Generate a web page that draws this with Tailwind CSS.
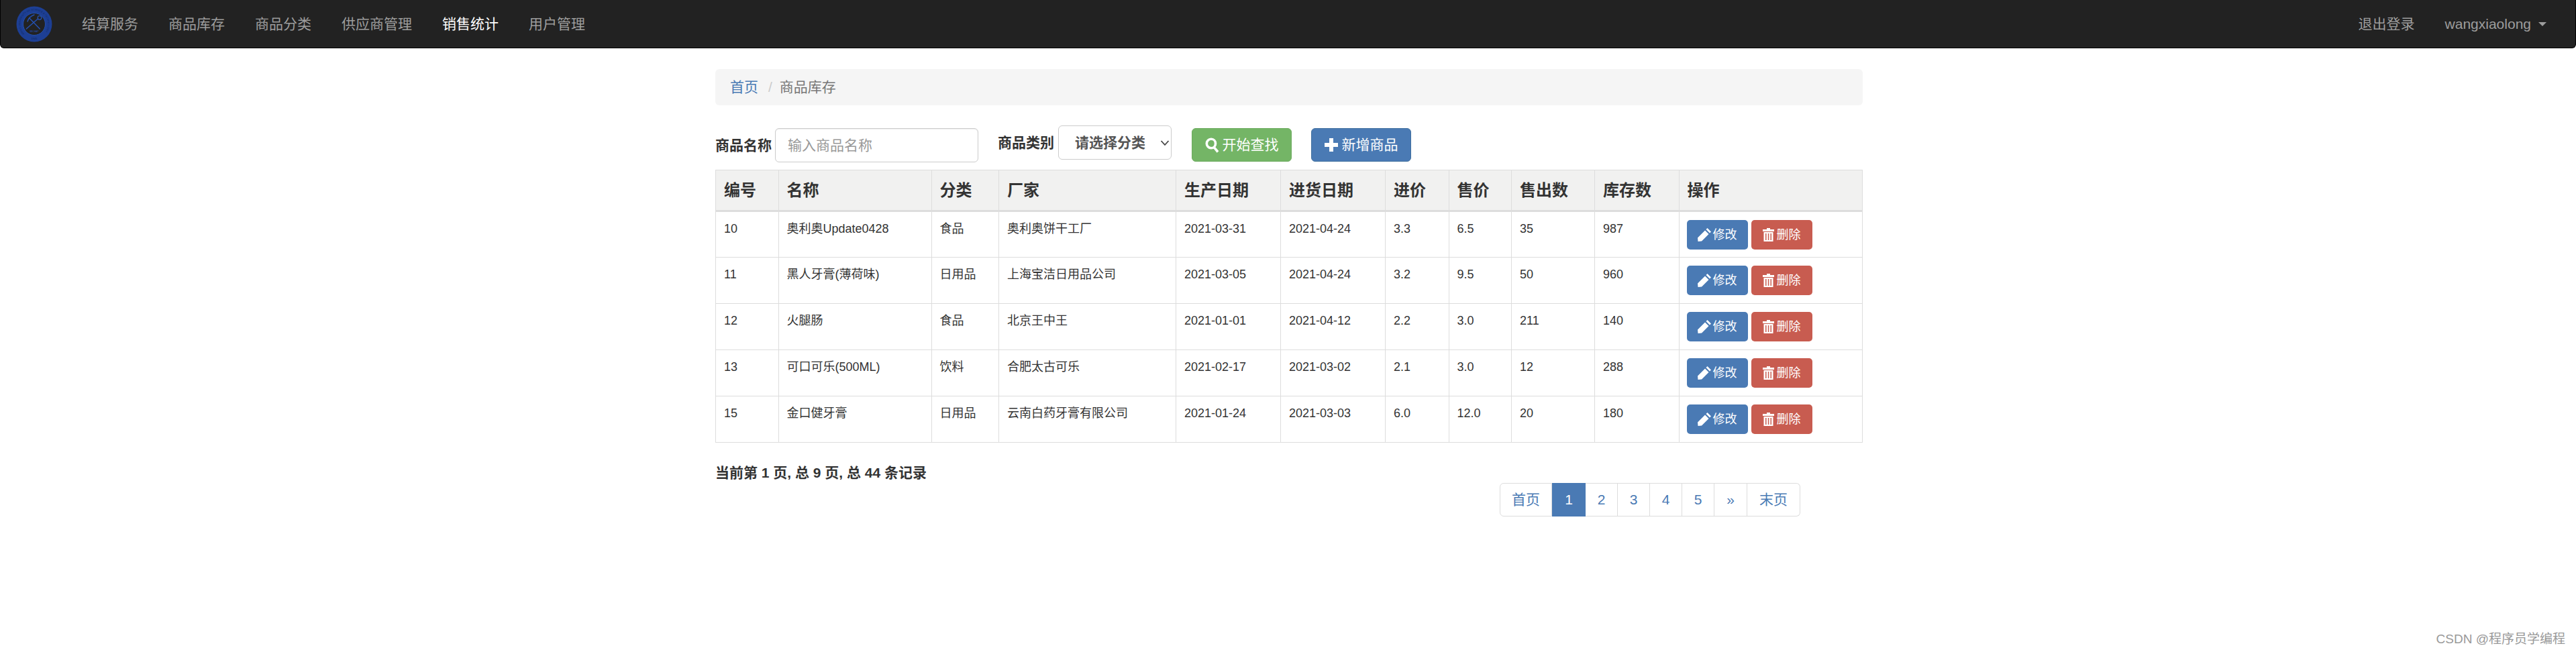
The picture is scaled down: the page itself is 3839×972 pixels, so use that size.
<!doctype html>
<html lang="zh-CN">
<head>
<meta charset="utf-8">
<title>商品库存</title>
<script src="https://cdn.jsdelivr.net/npm/@tailwindcss/browser@4"></script>
</head>
<body class="relative h-[972px] overflow-hidden bg-white text-[#333] font-['Liberation_Sans','Noto_Sans_CJK_SC',sans-serif]">
<nav class="flex h-[72px] items-center rounded-b-[6px] border border-black border-t-0 bg-[#222] text-[21px] text-[#9d9d9d]">
  <svg class="ml-[23px] h-[54px] w-[54px] shrink-0" viewBox="0 0 54 54" fill="none">
    <circle cx="27" cy="27" r="26.500" fill="#1d3f94"/>
    <circle cx="27" cy="27" r="16.500" fill="#222" stroke="#2450b0" stroke-width="1"/>
    <path id="logo-arc" d="M12.500 41.500a20.500 20.500 0 1 1 29 0" fill="none"/>
    <text font-size="3.800" fill="#11285f" font-family="Liberation Sans"><textPath href="#logo-arc" textLength="92" lengthAdjust="spacingAndGlyphs">ANHUI UNIVERSITY OF SCIENCE &amp; TECHNOLOGY</textPath></text>
    <text x="27" y="50" text-anchor="middle" font-size="4" fill="#0f2354" font-family="Liberation Sans">1945</text>
    <path d="M15.300 34 32.500 19M35.300 34 20.300 18.500M17 23c1-4 5-8 10-10" stroke="#2450b0" stroke-width="1.500" stroke-linecap="round"/>
    <circle cx="35" cy="17.500" r="2.800" stroke="#2450b0" stroke-width="1.300"/>
    <text x="27" y="39" text-anchor="middle" font-size="3.200" fill="#2450b0" font-family="Liberation Sans">BBCHAP</text>
  </svg>
  <ul class="ml-[44px] flex gap-[45px]">
    <li><a href="#">结算服务</a></li>
    <li><a href="#">商品库存</a></li>
    <li><a href="#">商品分类</a></li>
    <li><a href="#">供应商管理</a></li>
    <li><a href="#" class="text-white">销售统计</a></li>
    <li><a href="#">用户管理</a></li>
  </ul>
  <ul class="ml-auto flex items-center gap-[45px] pr-[43px]">
    <li><a href="#">退出登录</a></li>
    <li class="flex items-center gap-[11px]"><a href="#">wangxiaolong</a><span class="h-0 w-0 border-x-[6px] border-t-[6px] border-x-transparent border-t-[#9d9d9d]"></span></li>
  </ul>
</nav>

<main class="ml-[1066px] w-[1710px] pt-[31px]">
  <div class="flex h-[54px] items-center rounded-[6px] bg-[#f5f5f5] px-[22px] text-[21px]">
    <a href="#" class="text-[#4a7ab4]">首页</a>
    <span class="ml-[15px] text-[#ccc]">/</span>
    <span class="ml-[11px] text-[#777]">商品库存</span>
  </div>

  <form class="mt-[30px] flex h-[66px] items-start text-[21px]">
    <label class="mt-[4px] flex items-center font-bold">
      <span class="w-[89px]">商品名称</span>
      <input class="h-[51px] w-[303px] rounded-[6px] border border-[#ccc] px-[18px] font-normal shadow-[inset_0_1px_1px_rgba(0,0,0,0.075)] placeholder:text-[#999]" placeholder="输入商品名称">
    </label>
    <label class="ml-[29px] flex items-center font-bold">
      <span class="w-[90px]">商品类别</span>
      <span class="relative block">
        <select class="h-[51px] w-[169px] appearance-none rounded-[6px] border border-[#ccc] bg-white pl-[24px] font-bold text-[#555]"><option>请选择分类</option></select>
        <svg class="absolute right-[3px] top-[21px] h-[10px] w-[14px]" viewBox="0 0 14 10" fill="none"><path d="M1.500 2 7 8l5.500-6" stroke="#444" stroke-width="1.800"/></svg>
      </span>
    </label>
    <button type="button" class="ml-[30px] mt-[4px] flex h-[50px] w-[149px] items-center justify-center gap-[5px] rounded-[6px] border border-[#6cab5e] bg-[#74b566] text-white">
      <svg class="h-[23px] w-[21px]" viewBox="0 0 21 23"><path fill="none" stroke="#fff" stroke-width="3.600" d="M9 2.200c3.800 0 6.500 3 6.500 6.800s-2.700 6.800-6.500 6.800-6.700-3-6.700-6.800 2.900-6.800 6.700-6.800zM13.500 14.800l5.500 6.700"/></svg>
      开始查找
    </button>
    <button type="button" class="ml-[29px] mt-[4px] flex h-[50px] w-[149px] items-center justify-center gap-[6px] rounded-[6px] border border-[#41709f] bg-[#4a7ab4] text-white">
      <svg class="h-[20px] w-[20px]" viewBox="0 0 20 20"><path fill="#fff" d="M7 0h6v7h7v6h-7v7H7v-7H0V7h7z"/></svg>
      新增商品
    </button>
  </form>

  <table class="w-[1710px] table-fixed border-collapse text-left text-[18px]">
    <colgroup>
      <col class="w-[93.500px]"><col class="w-[228px]"><col class="w-[100.500px]"><col class="w-[264px]"><col class="w-[156px]"><col class="w-[156px]"><col class="w-[94.500px]"><col class="w-[93.500px]"><col class="w-[124px]"><col class="w-[125.500px]"><col class="w-[273.500px]">
    </colgroup>
    <thead>
      <tr class="h-[61px] bg-[#f1f1f0] text-[24px]">
        <th class="border border-b-[3px] border-[#ddd] px-3">编号</th>
        <th class="border border-b-[3px] border-[#ddd] px-3">名称</th>
        <th class="border border-b-[3px] border-[#ddd] px-3">分类</th>
        <th class="border border-b-[3px] border-[#ddd] px-3">厂家</th>
        <th class="border border-b-[3px] border-[#ddd] px-3">生产日期</th>
        <th class="border border-b-[3px] border-[#ddd] px-3">进货日期</th>
        <th class="border border-b-[3px] border-[#ddd] px-3">进价</th>
        <th class="border border-b-[3px] border-[#ddd] px-3">售价</th>
        <th class="border border-b-[3px] border-[#ddd] px-3">售出数</th>
        <th class="border border-b-[3px] border-[#ddd] px-3">库存数</th>
        <th class="border border-b-[3px] border-[#ddd] px-3">操作</th>
      </tr>
    </thead>
    <tbody>
      <tr class="h-[69px]">
        <td class="border border-[#ddd] px-3 pt-3 align-top leading-[26px]">10</td>
        <td class="border border-[#ddd] px-3 pt-3 align-top leading-[26px]">奥利奥Update0428</td>
        <td class="border border-[#ddd] px-3 pt-3 align-top leading-[26px]">食品</td>
        <td class="border border-[#ddd] px-3 pt-3 align-top leading-[26px]">奥利奥饼干工厂</td>
        <td class="border border-[#ddd] px-3 pt-3 align-top leading-[26px]">2021-03-31</td>
        <td class="border border-[#ddd] px-3 pt-3 align-top leading-[26px]">2021-04-24</td>
        <td class="border border-[#ddd] px-3 pt-3 align-top leading-[26px]">3.3</td>
        <td class="border border-[#ddd] px-3 pt-3 align-top leading-[26px]">6.5</td>
        <td class="border border-[#ddd] px-3 pt-3 align-top leading-[26px]">35</td>
        <td class="border border-[#ddd] px-3 pt-3 align-top leading-[26px]">987</td>
        <td class="border border-[#ddd] pl-[11px] pt-3 align-top"><div class="flex gap-[5px]">
          <a href="#" class="flex h-[44px] w-[91px] items-center justify-center gap-[3px] rounded-[5px] bg-[#4a7ab4] text-white"><svg class="h-[20px] w-[20px]" viewBox="0 0 20 20"><path fill="#fff" d="M14.500 0 20 5.500 18 7.500 12.500 2zM11 3.500 16.500 9 6 19.500.500 20 0 14.500z"/></svg>修改</a>
          <a href="#" class="flex h-[44px] w-[91px] items-center justify-center gap-[4px] rounded-[5px] bg-[#c85c50] text-white"><svg class="h-[20px] w-[17px]" viewBox="0 0 17 20"><path fill="#fff" fill-rule="evenodd" d="M6 0h5v2h6v3H0V2h6zM1.500 6h14v14h-14zM4 8v10h1.500V8zm3.800 0v10h1.500V8zm3.700 0v10H13V8z"/></svg>删除</a>
        </div></td>
      </tr>
      <tr class="h-[69px]">
        <td class="border border-[#ddd] px-3 pt-3 align-top leading-[26px]">11</td>
        <td class="border border-[#ddd] px-3 pt-3 align-top leading-[26px]">黑人牙膏(薄荷味)</td>
        <td class="border border-[#ddd] px-3 pt-3 align-top leading-[26px]">日用品</td>
        <td class="border border-[#ddd] px-3 pt-3 align-top leading-[26px]">上海宝洁日用品公司</td>
        <td class="border border-[#ddd] px-3 pt-3 align-top leading-[26px]">2021-03-05</td>
        <td class="border border-[#ddd] px-3 pt-3 align-top leading-[26px]">2021-04-24</td>
        <td class="border border-[#ddd] px-3 pt-3 align-top leading-[26px]">3.2</td>
        <td class="border border-[#ddd] px-3 pt-3 align-top leading-[26px]">9.5</td>
        <td class="border border-[#ddd] px-3 pt-3 align-top leading-[26px]">50</td>
        <td class="border border-[#ddd] px-3 pt-3 align-top leading-[26px]">960</td>
        <td class="border border-[#ddd] pl-[11px] pt-3 align-top"><div class="flex gap-[5px]">
          <a href="#" class="flex h-[44px] w-[91px] items-center justify-center gap-[3px] rounded-[5px] bg-[#4a7ab4] text-white"><svg class="h-[20px] w-[20px]" viewBox="0 0 20 20"><path fill="#fff" d="M14.500 0 20 5.500 18 7.500 12.500 2zM11 3.500 16.500 9 6 19.500.500 20 0 14.500z"/></svg>修改</a>
          <a href="#" class="flex h-[44px] w-[91px] items-center justify-center gap-[4px] rounded-[5px] bg-[#c85c50] text-white"><svg class="h-[20px] w-[17px]" viewBox="0 0 17 20"><path fill="#fff" fill-rule="evenodd" d="M6 0h5v2h6v3H0V2h6zM1.500 6h14v14h-14zM4 8v10h1.500V8zm3.800 0v10h1.500V8zm3.700 0v10H13V8z"/></svg>删除</a>
        </div></td>
      </tr>
      <tr class="h-[69px]">
        <td class="border border-[#ddd] px-3 pt-3 align-top leading-[26px]">12</td>
        <td class="border border-[#ddd] px-3 pt-3 align-top leading-[26px]">火腿肠</td>
        <td class="border border-[#ddd] px-3 pt-3 align-top leading-[26px]">食品</td>
        <td class="border border-[#ddd] px-3 pt-3 align-top leading-[26px]">北京王中王</td>
        <td class="border border-[#ddd] px-3 pt-3 align-top leading-[26px]">2021-01-01</td>
        <td class="border border-[#ddd] px-3 pt-3 align-top leading-[26px]">2021-04-12</td>
        <td class="border border-[#ddd] px-3 pt-3 align-top leading-[26px]">2.2</td>
        <td class="border border-[#ddd] px-3 pt-3 align-top leading-[26px]">3.0</td>
        <td class="border border-[#ddd] px-3 pt-3 align-top leading-[26px]">211</td>
        <td class="border border-[#ddd] px-3 pt-3 align-top leading-[26px]">140</td>
        <td class="border border-[#ddd] pl-[11px] pt-3 align-top"><div class="flex gap-[5px]">
          <a href="#" class="flex h-[44px] w-[91px] items-center justify-center gap-[3px] rounded-[5px] bg-[#4a7ab4] text-white"><svg class="h-[20px] w-[20px]" viewBox="0 0 20 20"><path fill="#fff" d="M14.500 0 20 5.500 18 7.500 12.500 2zM11 3.500 16.500 9 6 19.500.500 20 0 14.500z"/></svg>修改</a>
          <a href="#" class="flex h-[44px] w-[91px] items-center justify-center gap-[4px] rounded-[5px] bg-[#c85c50] text-white"><svg class="h-[20px] w-[17px]" viewBox="0 0 17 20"><path fill="#fff" fill-rule="evenodd" d="M6 0h5v2h6v3H0V2h6zM1.500 6h14v14h-14zM4 8v10h1.500V8zm3.800 0v10h1.500V8zm3.700 0v10H13V8z"/></svg>删除</a>
        </div></td>
      </tr>
      <tr class="h-[69px]">
        <td class="border border-[#ddd] px-3 pt-3 align-top leading-[26px]">13</td>
        <td class="border border-[#ddd] px-3 pt-3 align-top leading-[26px]">可口可乐(500ML)</td>
        <td class="border border-[#ddd] px-3 pt-3 align-top leading-[26px]">饮料</td>
        <td class="border border-[#ddd] px-3 pt-3 align-top leading-[26px]">合肥太古可乐</td>
        <td class="border border-[#ddd] px-3 pt-3 align-top leading-[26px]">2021-02-17</td>
        <td class="border border-[#ddd] px-3 pt-3 align-top leading-[26px]">2021-03-02</td>
        <td class="border border-[#ddd] px-3 pt-3 align-top leading-[26px]">2.1</td>
        <td class="border border-[#ddd] px-3 pt-3 align-top leading-[26px]">3.0</td>
        <td class="border border-[#ddd] px-3 pt-3 align-top leading-[26px]">12</td>
        <td class="border border-[#ddd] px-3 pt-3 align-top leading-[26px]">288</td>
        <td class="border border-[#ddd] pl-[11px] pt-3 align-top"><div class="flex gap-[5px]">
          <a href="#" class="flex h-[44px] w-[91px] items-center justify-center gap-[3px] rounded-[5px] bg-[#4a7ab4] text-white"><svg class="h-[20px] w-[20px]" viewBox="0 0 20 20"><path fill="#fff" d="M14.500 0 20 5.500 18 7.500 12.500 2zM11 3.500 16.500 9 6 19.500.500 20 0 14.500z"/></svg>修改</a>
          <a href="#" class="flex h-[44px] w-[91px] items-center justify-center gap-[4px] rounded-[5px] bg-[#c85c50] text-white"><svg class="h-[20px] w-[17px]" viewBox="0 0 17 20"><path fill="#fff" fill-rule="evenodd" d="M6 0h5v2h6v3H0V2h6zM1.500 6h14v14h-14zM4 8v10h1.500V8zm3.800 0v10h1.500V8zm3.700 0v10H13V8z"/></svg>删除</a>
        </div></td>
      </tr>
      <tr class="h-[69px]">
        <td class="border border-[#ddd] px-3 pt-3 align-top leading-[26px]">15</td>
        <td class="border border-[#ddd] px-3 pt-3 align-top leading-[26px]">金口健牙膏</td>
        <td class="border border-[#ddd] px-3 pt-3 align-top leading-[26px]">日用品</td>
        <td class="border border-[#ddd] px-3 pt-3 align-top leading-[26px]">云南白药牙膏有限公司</td>
        <td class="border border-[#ddd] px-3 pt-3 align-top leading-[26px]">2021-01-24</td>
        <td class="border border-[#ddd] px-3 pt-3 align-top leading-[26px]">2021-03-03</td>
        <td class="border border-[#ddd] px-3 pt-3 align-top leading-[26px]">6.0</td>
        <td class="border border-[#ddd] px-3 pt-3 align-top leading-[26px]">12.0</td>
        <td class="border border-[#ddd] px-3 pt-3 align-top leading-[26px]">20</td>
        <td class="border border-[#ddd] px-3 pt-3 align-top leading-[26px]">180</td>
        <td class="border border-[#ddd] pl-[11px] pt-3 align-top"><div class="flex gap-[5px]">
          <a href="#" class="flex h-[44px] w-[91px] items-center justify-center gap-[3px] rounded-[5px] bg-[#4a7ab4] text-white"><svg class="h-[20px] w-[20px]" viewBox="0 0 20 20"><path fill="#fff" d="M14.500 0 20 5.500 18 7.500 12.500 2zM11 3.500 16.500 9 6 19.500.500 20 0 14.500z"/></svg>修改</a>
          <a href="#" class="flex h-[44px] w-[91px] items-center justify-center gap-[4px] rounded-[5px] bg-[#c85c50] text-white"><svg class="h-[20px] w-[17px]" viewBox="0 0 17 20"><path fill="#fff" fill-rule="evenodd" d="M6 0h5v2h6v3H0V2h6zM1.500 6h14v14h-14zM4 8v10h1.500V8zm3.800 0v10h1.500V8zm3.700 0v10H13V8z"/></svg>删除</a>
        </div></td>
      </tr>
    </tbody>
  </table>

  <div class="flex text-[21px]">
    <p class="mt-[30px] w-[1169px] font-bold leading-[30px]">当前第 1 页, 总 9 页, 总 44 条记录</p>
    <ul class="mt-[60px] flex h-[50px] text-[#4a7ab4]">
      <li><a href="#" class="flex h-full w-[78px] items-center justify-center rounded-l-[6px] border border-[#ddd]">首页</a></li>
      <li><a href="#" class="flex h-full w-[50px] items-center justify-center bg-[#4a7ab4] text-white">1</a></li>
      <li><a href="#" class="flex h-full w-[48px] items-center justify-center border border-l-0 border-[#ddd]">2</a></li>
      <li><a href="#" class="flex h-full w-[48px] items-center justify-center border border-l-0 border-[#ddd]">3</a></li>
      <li><a href="#" class="flex h-full w-[48px] items-center justify-center border border-l-0 border-[#ddd]">4</a></li>
      <li><a href="#" class="flex h-full w-[48px] items-center justify-center border border-l-0 border-[#ddd]">5</a></li>
      <li><a href="#" class="flex h-full w-[49px] items-center justify-center border border-l-0 border-[#ddd]">»</a></li>
      <li><a href="#" class="flex h-full w-[79px] items-center justify-center rounded-r-[6px] border border-l-0 border-[#ddd]">末页</a></li>
    </ul>
  </div>
</main>

<div class="absolute right-[16px] top-[941px] text-[19px] leading-[24px] text-[#999]">CSDN @程序员学编程</div>
</body>
</html>
